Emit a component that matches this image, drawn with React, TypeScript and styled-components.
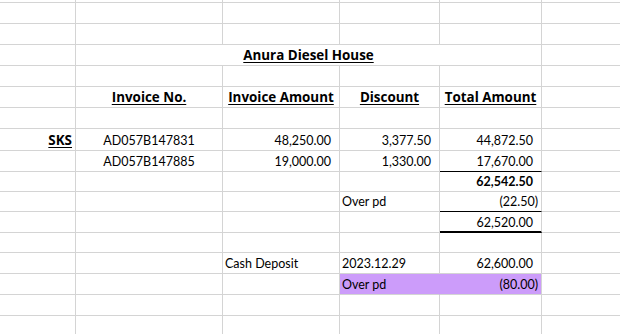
import React from "react";
import styled, { createGlobalStyle, css } from "styled-components";

const GlobalStyle = createGlobalStyle`
  html, body {
    margin: 0;
    padding: 0;
    background: #ffffff;
    overflow: hidden;
  }
  body {
    font-family: Lato, "Open Sans", "Liberation Sans", sans-serif;
    color: #000000;
  }
`;

const GRID = "#d4d4d4";
const PURPLE = "#cc9cfa";

const COLUMNS = [76, 147, 117, 100, 102, 90];
const ROWS = [3, 21, 21, 21, 21, 21, 21, 22, 21, 20, 20, 21, 20, 21, 21, 21, 20];

type Align = "left" | "center" | "right";
type Edge = "thin" | "thick";

interface CellSpec {
  text?: string;
  align?: Align;
  bold?: boolean;
  underline?: boolean;
  fill?: string;
  span?: number;
  edge?: Edge;
  neg?: boolean;
  joinRight?: boolean;
}

const Sheet = styled.div`
  display: grid;
  width: ${COLUMNS.reduce((a, b) => a + b, 0)}px;
  grid-template-columns: ${COLUMNS.map((c) => `${c}px`).join(" ")};
  grid-template-rows: ${ROWS.map((r) => `${r}px`).join(" ")};
`;

const Cell = styled.div<{
  $align: Align;
  $bold: boolean;
  $fill?: string;
  $span: number;
  $edge?: Edge;
  $neg: boolean;
  $joinRight: boolean;
}>`
  box-sizing: border-box;
  grid-column: span ${(p) => p.$span};
  display: flex;
  align-items: flex-end;
  justify-content: ${(p) =>
    p.$align === "left" ? "flex-start" : p.$align === "right" ? "flex-end" : "center"};
  padding: 0 2px 2px 2px;
  overflow: visible;
  white-space: nowrap;
  font-size: 12.5px;
  line-height: 15px;
  font-weight: ${(p) => (p.$bold ? 700 : 400)};
  background: ${(p) => p.$fill ?? "transparent"};
  border-right: 1px solid ${(p) => (p.$joinRight && p.$fill ? p.$fill : GRID)};
  border-bottom: 1px solid ${GRID};
  ${(p) =>
    p.$edge === "thin" &&
    css`
      border-bottom-color: #000000;
    `}
  ${(p) =>
    p.$edge === "thick" &&
    css`
      border-bottom: 2px solid #000000;
      padding-bottom: 1px;
    `}
  ${(p) =>
    p.$align === "right" &&
    css`
      padding-right: ${p.$neg ? 3 : 8}px;
    `}
`;

const Label = styled.span<{ $underline: boolean }>`
  ${(p) =>
    p.$underline &&
    css`
      font-family: "Open Sans", Lato, sans-serif;
      font-size: 13.4px;
      line-height: 15px;
      text-decoration: underline;
      text-decoration-thickness: 1px;
      text-underline-offset: 2px;
    `}
`;

const E: CellSpec = {};
const blank = (): CellSpec[] => [E, E, E, E, E, E];
const num = (text: string, extra: Partial<CellSpec> = {}): CellSpec => ({
  text,
  align: "right",
  ...extra,
});
const head = (text: string): CellSpec => ({
  text,
  align: "center",
  bold: true,
  underline: true,
});

const DATA: CellSpec[][] = [
  blank(),
  blank(),
  blank(),
  [
    E,
    { text: "Anura Diesel House", span: 4, align: "center", bold: true, underline: true },
    E,
  ],
  blank(),
  [E, head("Invoice No."), head("Invoice Amount"), head("Discount"), head("Total Amount"), E],
  blank(),
  [
    { text: "SKS", align: "right", bold: true, underline: true, neg: true },
    { text: "AD057B147831", align: "center" },
    num("48,250.00"),
    num("3,377.50"),
    num("44,872.50"),
    E,
  ],
  [
    E,
    { text: "AD057B147885", align: "center" },
    num("19,000.00"),
    num("1,330.00"),
    num("17,670.00", { edge: "thin" }),
    E,
  ],
  [E, E, E, E, num("62,542.50", { bold: true }), E],
  [E, E, E, { text: "Over pd", align: "left" }, num("(22.50)", { neg: true, edge: "thin" }), E],
  [E, E, E, E, num("62,520.00", { edge: "thick" }), E],
  blank(),
  [
    E,
    E,
    { text: "Cash Deposit", align: "left" },
    { text: "2023.12.29", align: "left" },
    num("62,600.00"),
    E,
  ],
  [
    E,
    E,
    E,
    { text: "Over pd", align: "left", fill: PURPLE, joinRight: true },
    num("(80.00)", { neg: true, fill: PURPLE }),
    E,
  ],
  blank(),
  blank(),
];

export default function App() {
  return (
    <>
      <GlobalStyle />
      <Sheet>
        {DATA.map((row, r) =>
          row.map((c, i) => (
            <Cell
              key={`${r}-${i}`}
              $align={c.align ?? "left"}
              $bold={!!c.bold}
              $fill={c.fill}
              $span={c.span ?? 1}
              $edge={c.edge}
              $neg={!!c.neg}
              $joinRight={!!c.joinRight}
            >
              {c.text ? <Label $underline={!!c.underline}>{c.text}</Label> : null}
            </Cell>
          ))
        )}
      </Sheet>
    </>
  );
}
